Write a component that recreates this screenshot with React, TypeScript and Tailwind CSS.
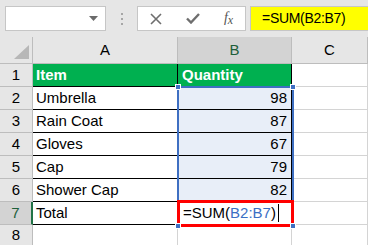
import React from "react";

const rows = [
  { n: 2, item: "Umbrella", qty: 98 },
  { n: 3, item: "Rain Coat", qty: 87 },
  { n: 4, item: "Gloves", qty: 67 },
  { n: 5, item: "Cap", qty: 79 },
  { n: 6, item: "Shower Cap", qty: 82 },
];

function Handle({ className }: { className: string }) {
  return (
    <div
      className={`absolute w-[6px] h-[6px] bg-[#3e6fc2] border border-white ${className}`}
    />
  );
}

export default function App() {
  return (
    <div className="w-[368px] h-[247px] overflow-hidden bg-white font-['Liberation_Sans',Arial,sans-serif] text-[15px] text-black">
      {/* formula bar */}
      <div className="h-[37px] bg-[#e6e6e6] flex items-start pt-[6px] pl-[5px]">
        <div className="w-[101px] h-[25px] bg-white border border-[#c6c6c6] flex items-center justify-end pr-[7px]">
          <svg width="9" height="5" viewBox="0 0 9 5">
            <path d="M0 0 L9 0 L4.5 5 Z" fill="#6b6b6b" />
          </svg>
        </div>
        <div className="w-[31px] h-[25px] flex flex-col items-center justify-center gap-[3px]">
          <span className="w-[2px] h-[2px] bg-[#a6a6a6]" />
          <span className="w-[2px] h-[2px] bg-[#a6a6a6]" />
          <span className="w-[2px] h-[2px] bg-[#a6a6a6]" />
        </div>
        <div className="w-[109px] h-[25px] bg-white border border-[#c6c6c6] flex items-center">
          <div className="w-[36px] flex justify-center">
            <svg width="12" height="12" viewBox="0 0 12 12">
              <path d="M1 1 L11 11 M11 1 L1 11" stroke="#6e6e6e" strokeWidth="1.6" />
            </svg>
          </div>
          <div className="w-[38px] flex justify-center">
            <svg width="14" height="11" viewBox="0 0 14 11">
              <path d="M1 5.5 L5 9.5 L13 1" stroke="#6e6e6e" strokeWidth="2.4" fill="none" />
            </svg>
          </div>
          <div className="flex-1 flex justify-center font-['Liberation_Serif',serif] italic text-[14px] text-[#555] leading-none">
            <span>f</span>
            <span className="text-[12px] mt-[3px]">x</span>
          </div>
        </div>
        <div className="ml-[4px] flex-1 h-[25px] bg-[#ffff00] border border-[#c6c6c6] border-r-0 flex items-center pl-[11px] text-[14px] tracking-[-0.3px]">
          =SUM(B2:B7)
        </div>
      </div>

      {/* sheet */}
      <div className="relative grid grid-cols-[33px_145px_114px_76px] grid-rows-[27px_repeat(7,23px)_20px]">
        {/* header row */}
        <div className="bg-[#e6e6e6] border-r border-b border-[#bdbdbd] relative">
          <svg className="absolute right-[3px] bottom-[4px]" width="15" height="14" viewBox="0 0 15 14">
            <path d="M15 0 L15 14 L0 14 Z" fill="#b7b7b7" />
          </svg>
        </div>
        <div className="bg-[#e6e6e6] border-r border-b border-[#bdbdbd] flex items-center justify-center">A</div>
        <div className="bg-[#d3d3d3] border-r border-b border-[#bdbdbd] flex items-center justify-center text-[#1e5f3a]">B</div>
        <div className="bg-[#e6e6e6] border-r border-b border-[#bdbdbd] flex items-center justify-center">C</div>

        {/* row 1 */}
        <div className="bg-[#e6e6e6] border-r border-b border-[#bdbdbd] flex items-center justify-center">1</div>
        <div className="bg-[#00b050] border-r border-b border-black flex items-center pl-[3px] font-bold text-white">Item</div>
        <div className="bg-[#00b050] border-r border-b border-black flex items-center pl-[4px] font-bold text-white">Quantity</div>
        <div className="border-r border-b border-[#d4d4d4]" />

        {rows.map((r) => (
          <React.Fragment key={r.n}>
            <div className="bg-[#e6e6e6] border-r border-b border-[#bdbdbd] flex items-center justify-center">{r.n}</div>
            <div className="border-r border-b border-black flex items-center pl-[3px]">{r.item}</div>
            <div className="bg-[#e8eef8] border-r border-b border-black flex items-center justify-end pr-[4px]">{r.qty}</div>
            <div className="border-r border-b border-[#d4d4d4]" />
          </React.Fragment>
        ))}

        {/* row 7 */}
        <div className="bg-[#d3d3d3] border-r-2 border-r-[#217346] border-b border-b-[#bdbdbd] flex items-center justify-center text-[#1e5f3a]">7</div>
        <div className="border-r border-b border-black flex items-center pl-[3px]">Total</div>
        <div className="border-r border-b border-black flex items-center pl-[5px]">
          <span>=SUM(</span>
          <span className="text-[#3b6fc4]">B2:B7</span>
          <span>)</span>
          <span className="ml-[2px] w-px h-[18px] bg-black" />
        </div>
        <div className="border-r border-b border-[#d4d4d4]" />

        {/* row 8 */}
        <div className="bg-[#e6e6e6] border-r border-[#bdbdbd] flex items-center justify-center">8</div>
        <div className="border-r border-[#d4d4d4]" />
        <div className="border-r border-[#d4d4d4]" />
        <div className="border-r border-[#d4d4d4]" />

        {/* referenced range B2:B7 */}
        <div className="absolute left-[177px] top-[49px] w-[117px] h-[141px] border-2 border-[#3e6fc2] pointer-events-none" />
        {/* edited cell B7 */}
        <div className="absolute left-[177px] top-[163px] w-[117px] h-[27px] border-[3px] border-[#ff0000] pointer-events-none" />
        <Handle className="left-[175px] top-[47px]" />
        <Handle className="left-[290px] top-[47px]" />
        <Handle className="left-[175px] top-[186px]" />
        <Handle className="left-[290px] top-[186px]" />
      </div>
    </div>
  );
}
